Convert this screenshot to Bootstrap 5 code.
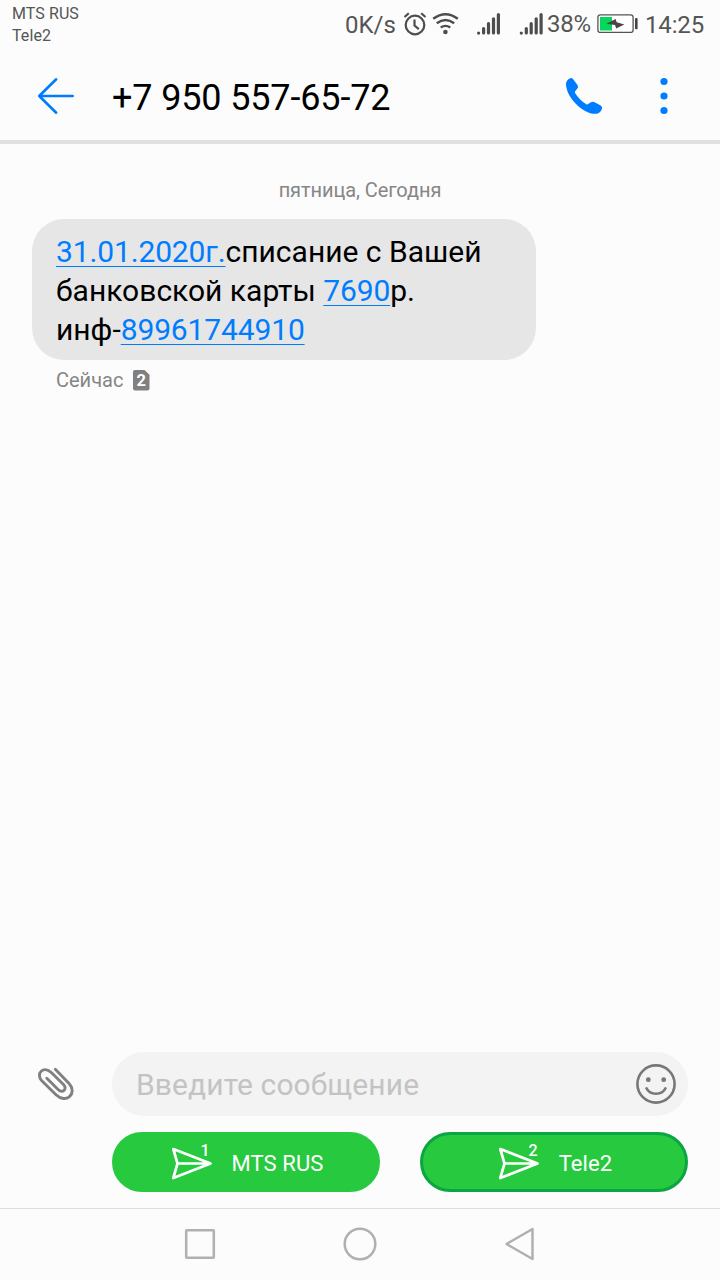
<!DOCTYPE html>
<html lang="ru">
<head>
<meta charset="utf-8">
<meta name="viewport" content="width=device-width, initial-scale=1">
<title>Сообщения</title>
<link rel="stylesheet" href="https://cdn.jsdelivr.net/npm/bootstrap@5.3.0/dist/css/bootstrap.min.css">
<style>
body{font-family:Roboto,"Noto Sans",sans-serif;background:#fcfcfc;color:#000;height:1280px;overflow:hidden}
svg{display:block;flex:none}
.status{height:48px;color:#555;font-size:24px;line-height:28px;white-space:nowrap}
.carriers{font-size:16px;line-height:22px;padding:3px 0 0 12px;letter-spacing:.08px}
.indicators{height:48px;padding-right:15px}
.percent{width:50px;padding-top:10px;letter-spacing:-.3px}
.speed{width:57px;padding-top:11px}
.clock{width:60px;padding-top:11px;letter-spacing:-.15px}
.topbar{height:96px;border-bottom:4px solid #e0e0e0;padding:4px 48px 0 32px;gap:32px}
.number{font-size:36px;line-height:44px;margin:3px 0 0;letter-spacing:-.15px}
.topbar a,.bubble a{color:#007dff}
.day{font-size:20px;line-height:24px;color:#868686;margin-top:34px;letter-spacing:-.08px}
.bubble{width:504px;height:141px;margin:17px 0 0 32px;padding:13px 24px;border-radius:32px;background:#e6e6e6;font-size:30px;line-height:39px;white-space:nowrap}
.bubble a{text-decoration-thickness:1px;text-underline-offset:4px;text-decoration-skip-ink:none;letter-spacing:-.14px}
.stamp{font-size:20px;line-height:24px;color:#868686;margin:8px 0 0 56px;gap:10px}
.compose{height:64px;padding:0 32px}
.field{height:64px;background:#f3f3f3;border-radius:32px;padding:0 12px 0 24px;margin-left:32px;font-size:30px;color:#c3c3c3;letter-spacing:.1px}
.sends{padding:16px 32px 16px 112px;gap:40px}
.send{height:60px;border-radius:30px;border:3px solid #27c93f;background:#27c93f;color:#fff;font-size:22px;line-height:26px;gap:19px;padding:2px 0 0 2px;letter-spacing:.1px}
.send svg{margin-top:-2px}
.send span{padding-top:1px}
.send.chosen{border-color:#0ba543}
.send text{font-size:16px;font-weight:500}
.navkeys{height:72px;border-top:1px solid #dedede;padding-bottom:1px;gap:120px}
</style>
</head>
<body class="d-flex flex-column">
<header>
  <div class="status d-flex justify-content-between">
    <div class="carriers"><div>MTS RUS</div><div>Tele2</div></div>
    <div class="indicators d-flex">
      <div class="speed">0K/s</div>
      <svg width="28" height="48" viewBox="402 0 28 48" fill="none" stroke="#4d4d4d" stroke-width="2.2"><circle cx="415" cy="25" r="9.3"/><path d="M414.5 19.5v6l4.3 3.6M404.5 17l4.3-3.8M421.2 13.2l4.3 3.8"/></svg>
      <svg width="44" height="48" viewBox="430 0 44 48" fill="none" stroke="#4d4d4d" stroke-width="2.4"><path d="M433.2 18.8Q445.5 9.5 457.8 18.8M436.8 23.3Q445.5 16.8 454.2 23.3M440.7 27.6Q445.5 24.2 450.3 27.6"/><circle cx="445.4" cy="32" r="2.3" fill="#4d4d4d" stroke="none"/></svg>
      <svg width="43" height="48" viewBox="474 0 43 48" stroke="#4d4d4d" stroke-width="3.2" stroke-linecap="round"><path d="M478.6 33v.1M483.6 28.5V33M488.5 23.5V33M493.5 18.8V33M498.4 14.5V33"/></svg>
      <svg width="30" height="48" viewBox="474.3 0 30 48" stroke="#4d4d4d" stroke-width="3.2" stroke-linecap="round"><path d="M478.6 33v.1M483.6 28.5V33M488.5 23.5V33M493.5 18.8V33M498.4 14.5V33"/></svg>
      <div class="percent">38%</div>
      <svg width="48" height="48" viewBox="597 0 48 48"><rect x="597.9" y="14.8" width="35.2" height="17.6" rx="2.5" fill="#fff" stroke="#555" stroke-width="1.3"/><rect x="600" y="17" width="12" height="13.5" fill="#05d65c"/><path d="M606.500 23.800L615.500 19 616.700 22.300 624.300 24.400 616.200 28.400 615 25z" fill="#4d4545"/><rect x="635" y="18" width="2.6" height="11.3" rx="1" fill="#444"/></svg>
      <div class="clock">14:25</div>
    </div>
  </div>
  <div class="topbar d-flex align-items-center">
    <a href="#" aria-label="Назад"><svg width="48" height="48" viewBox="32 72 48 48" fill="none" stroke="#007dff" stroke-width="2.6" stroke-linecap="round" stroke-linejoin="round"><path d="M72.7 96H39.2M56.2 79.3L39.2 96l17 16.7"/></svg></a>
    <h1 class="number fw-normal me-auto">+7 950 557-65-72</h1>
    <a href="#" aria-label="Позвонить"><svg width="48" height="48" viewBox="560 72 48 48" fill="#007dff"><path d="M566 84.500C565.800 82 567 80 569.500 78.400Q571.500 77.300 573 78.900L577.300 84.800Q578.700 86.900 577.400 88.600L575.200 91.200Q574.500 92.200 575.400 93.500Q580 100.500 586.300 104.300Q587.300 104.900 588.200 104.100L590.800 102.200Q592.600 101.100 594.600 102.200L600.700 105.600Q602.600 106.800 602 108.700Q600.600 112.700 597 113.700C591 114.800 582 110.500 575.500 103.500C569.500 97 566.500 91 566 84.500Z"/></svg></a>
    <a href="#" aria-label="Меню"><svg width="32" height="48" viewBox="640 72 32 48" fill="#007dff"><circle cx="664" cy="81.500" r="3.600"/><circle cx="664" cy="96" r="3.600"/><circle cx="664" cy="110.500" r="3.600"/></svg></a>
  </div>
</header>
<main class="flex-grow-1">
  <div class="day text-center">пятница, Сегодня</div>
  <div class="bubble"><a href="#">31.01.2020г.</a>списание с Вашей<br>банковской карты <a href="#">7690</a>р.<br>инф-<a href="#">89961744910</a></div>
  <div class="stamp d-flex align-items-center"><span>Сейчас</span>
    <svg width="17" height="21" viewBox="0 0 17 21"><path d="M2 0h9.500L16.500 4.800V18.500a2 2 0 0 1-2 2H2a2 2 0 0 1-2-2V2a2 2 0 0 1 2-2z" fill="#808080"/><text x="8.300" y="16" text-anchor="middle" font-size="16.500" font-weight="700" fill="#fff">2</text></svg></div>
</main>
<footer>
  <div class="compose d-flex align-items-center">
    <svg width="48" height="48" viewBox="32 1060 48 48" fill="none" stroke="#808080" stroke-width="2.900" stroke-linecap="round" stroke-linejoin="round"><path d="M46.800 1078.300L57.800 1089.300C62.500 1093.900 67.800 1089.200 63.500 1084.500L51.300 1072.500C43.500 1065.300 35.200 1073.800 41.800 1080.700L56 1094.800C65.800 1104.300 77.800 1093.800 69.300 1083.800L55.300 1069.300"/></svg>
    <div class="field d-flex align-items-center justify-content-between flex-grow-1"><span>Введите сообщение</span>
      <svg width="40" height="40" viewBox="0 0 40 40" fill="none" stroke="#777" stroke-width="2.600"><circle cx="20" cy="20" r="18.600"/><path d="M10.500 24.300C14 31.600 26 31.600 29.500 24.300" stroke-linecap="round"/><g fill="#777" stroke="none"><circle cx="12.300" cy="15.700" r="2.400"/><circle cx="27.700" cy="15.700" r="2.400"/></g></svg></div>
  </div>
  <div class="sends d-flex">
    <button class="send btn d-flex align-items-center justify-content-center w-50"><svg width="42" height="44" viewBox="171 1140 42 44"><path d="M173.300 1149L210.500 1163.500 173.300 1178 177.500 1163.500zM177.500 1163.500H210" fill="none" stroke="#fff" stroke-width="2.700" stroke-linejoin="round"/><text x="200.500" y="1156" fill="#fff">1</text></svg><span>MTS RUS</span></button>
    <button class="send chosen btn d-flex align-items-center justify-content-center w-50"><svg width="42" height="44" viewBox="171 1140 42 44"><path d="M173.300 1149L210.500 1163.500 173.300 1178 177.500 1163.500zM177.500 1163.500H210" fill="none" stroke="#fff" stroke-width="2.700" stroke-linejoin="round"/><text x="201.500" y="1156" fill="#fff">2</text></svg><span>Tele2</span></button>
  </div>
  <nav class="navkeys d-flex justify-content-center align-items-center">
    <svg width="40" height="40" viewBox="180 1224 40 40" fill="none" stroke="#b0b0b0" stroke-width="2.500"><rect x="186.200" y="1230.200" width="27.600" height="27.600" rx=".5"/></svg>
    <svg width="40" height="40" viewBox="340 1224 40 40" fill="none" stroke="#b0b0b0" stroke-width="2.500"><circle cx="360" cy="1244" r="15.300"/></svg>
    <svg width="40" height="40" viewBox="500 1224 40 40" fill="none" stroke="#b0b0b0" stroke-width="2.500" stroke-linejoin="round"><path d="M506.500 1244L532.500 1229v30z"/></svg>
  </nav>
</footer>
<script src="https://cdn.jsdelivr.net/npm/bootstrap@5.3.0/dist/js/bootstrap.bundle.min.js"></script>
</body>
</html>
